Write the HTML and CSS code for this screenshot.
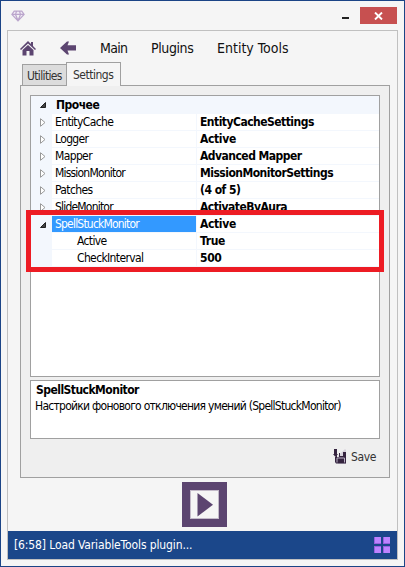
FILE: index.html
```
<!DOCTYPE html>
<html lang="ru">
<head>
<meta charset="utf-8">
<title>Entity Tools</title>
<link rel="stylesheet" href="styles.css">
</head>
<body>
<div class="window">
  <header class="titlebar">
    <svg class="gem" width="14" height="12" viewBox="0 0 14 12"><path d="M3.2 1.2h7.6l2.3 3.2L7 10.8.9 4.4zM1 4.4h12M4.5 4.4L7 10.5l2.5-6.1M4.5 4.4L5.5 1.3M9.5 4.4L8.5 1.3"/></svg>
    <span class="minimize"></span>
    <span class="close"><svg width="9" height="8" viewBox="0 0 9 8"><path d="M1 .5l7 7M8 .5l-7 7"/></svg></span>
  </header>
  <main class="frame">
    <nav class="menu">
      <svg class="home" width="16" height="15" viewBox="0 0 16 15"><path d="M8 0l3 3V1h2v4l3 3-1 1-7-6.500L1 9 0 8z"/><path d="M8 4l5.500 5v5.500H9.500V10h-3v4.500h-4V9z"/></svg>
      <svg class="back" width="16" height="14" viewBox="0 0 16 14"><path d="M0 7l7-6.500h2L7.500 4.300H16v5.200H7.500L9 13.500H7z"/></svg>
      <span class="m1">Main</span><span class="m2">Plugins</span><span class="m3">Entity Tools</span>
    </nav>
    <div class="tabs"><span class="tab">Utilities</span><span class="tab active">Settings</span></div>
    <section class="panel">
      <div class="grid">
        <div class="category"><i class="mark"><svg width="6" height="6"><path class="open" d="M5.500.5v5h-5z"/></svg></i><b class="cat">Прочее</b></div>
        <div class="row"><i class="mark"><svg width="6" height="9"><path d="M.5.700v7.600l4.500-3.800z"/></svg></i><span class="name">EntityCache</span><b class="value">EntityCacheSettings</b></div>
        <div class="row"><i class="mark"><svg width="6" height="9"><path d="M.5.700v7.600l4.500-3.800z"/></svg></i><span class="name">Logger</span><b class="value short">Active</b></div>
        <div class="row"><i class="mark"><svg width="6" height="9"><path d="M.5.700v7.600l4.500-3.800z"/></svg></i><span class="name">Mapper</span><b class="value">Advanced Mapper</b></div>
        <div class="row"><i class="mark"><svg width="6" height="9"><path d="M.5.700v7.600l4.500-3.800z"/></svg></i><span class="name tight">MissionMonitor</span><b class="value">MissionMonitorSettings</b></div>
        <div class="row"><i class="mark"><svg width="6" height="9"><path d="M.5.700v7.600l4.500-3.800z"/></svg></i><span class="name">Patches</span><b class="value">(4 of 5)</b></div>
        <div class="row"><i class="mark"><svg width="6" height="9"><path d="M.5.700v7.600l4.500-3.800z"/></svg></i><span class="name tight">SlideMonitor</span><b class="value">ActivateByAura</b></div>
        <div class="row"><i class="mark"><svg width="6" height="6"><path class="open" d="M5.500.5v5h-5z"/></svg></i><span class="name tight selected">SpellStuckMonitor</span><b class="value short">Active</b></div>
        <div class="row"><i class="mark"></i><span class="name child">Active</span><b class="value short">True</b></div>
        <div class="row"><i class="mark"></i><span class="name child">CheckInterval</span><b class="value short">500</b></div>
        <div class="highlight"></div>
      </div>
      <div class="description"><b>SpellStuckMonitor</b><span>Настройки фонового отключения умений (SpellStuckMonitor)</span></div>
      <div class="save">
        <svg width="15" height="17" viewBox="0 0 15 17"><path fill="#d7d2dc" d="M8 5l4-4 1 1v14H5V8z"/><path fill="#35243f" d="M1 1h3v5h1L2.500 9 0 6h1zM2 9h1V7h1v2h2V5h1v3h3V4h3v11.500H3L2 14z"/><path fill="none" stroke="#bbb1c5" d="M4 14.500V10h7.500v4.500"/></svg>
        <span>Save</span>
      </div>
    </section>
    <div class="play"><svg width="45" height="45"><rect width="45" height="45" fill="#5c4570"/><rect x="8.500" y="8.500" width="28" height="28" fill="#f5f5f5" stroke="#c3bac9"/><path fill="#5c4570" d="M15.500 11v23.500L31 22.700z"/></svg></div>
    <footer class="status"><span>[6:58] Load VariableTools plugin...</span><svg width="16" height="16"><path fill="#985fdf" d="M0 0h7v7H0zM9 0h7v7H9zM0 9h7v7H0zM9 9h7v7H9z"/><path fill="#bd83ff" d="M1 0h6v6H1zM10 0h6v6h-6zM1 10h6v6H1zM10 10h6v6h-6z"/></svg></footer>
  </main>
</div>
</body>
</html>
```
FILE: styles.css
```
* { box-sizing: border-box; }
body { margin: 0; font: 12px/16px "DejaVu Sans Condensed", "DejaVu Sans", sans-serif; font-stretch: condensed; color: #111; }
svg { display: block; flex: none; }
.window { width: 405px; height: 567px; border: 1px solid #1b4486; background: #f5f5f5; padding: 0 7px 7px 6px; }
.titlebar { height: 29px; display: flex; align-items: flex-start; }
.gem { margin: 9px 0 0 4px; fill: #f3edf7; stroke: #bba6cc; stroke-width: 1.2; }
.minimize { width: 7px; height: 2px; background: #222; margin: 16px 11px 0 auto; }
.close { width: 37px; height: 17px; margin-top: 6px; background: #c75050; display: flex; align-items: center; justify-content: center; }
.close svg { fill: none; stroke: #fff; stroke-width: 1.9; }
.frame { width: 391px; height: 530px; border: 1px solid #c0c0c0; display: flex; flex-direction: column; }
.menu { height: 31px; flex: none; display: flex; align-items: center; padding: 3px 0 0 12px; font-size: 14px; white-space: nowrap; }
.menu svg { fill: #5c4570; }
.back { margin-left: 24px; }
.m1 { width: 51px; margin-left: 24px; letter-spacing: -.7px; }
.m2 { width: 66px; letter-spacing: -.4px; }
.m3 { letter-spacing: 0; }
.tabs { height: 23px; flex: none; padding-left: 14px; display: flex; align-items: flex-end; color: #333; white-space: nowrap; }
.tab { width: 44px; height: 21px; border: 1px solid #a0a0a0; border-width: 1px 0 0 1px; background: #dcdcdc; padding: 3px 0 0 4px; letter-spacing: -.65px; }
.tab.active { width: 55px; height: 24px; margin-bottom: -1px; border-right-width: 1px; background: #f5f5f5; padding: 4px 0 0 6px; position: relative; letter-spacing: -.5px; }
.panel { width: 370px; height: 393px; flex: none; margin-left: 12px; border: 1px solid #a0a0a0; background: #efefef; padding: 9px; }
.grid { position: relative; width: 350px; height: 282px; border: 1px solid #a0a0a0; background: #fff; }
.category { height: 18px; display: flex; background: #f3f7fd; line-height: 18px; color: #000; }
.mark { width: 21px; flex: none; display: flex; align-items: center; padding-left: 9px; background: #f3f7fd; }
.mark svg { fill: #fff; stroke: #999; }
.mark .open { fill: #444; stroke: #222; }
.cat { padding-left: 4px; letter-spacing: -.5px; }
.row { display: flex; height: 17px; line-height: 16px; color: #000; white-space: nowrap; }
.name { width: 144px; padding-left: 3px; border-bottom: 1px solid #f3f7fd; letter-spacing: -.63px; }
.tight { letter-spacing: -.8px; }
.value { flex: 1; padding-left: 3px; border-left: 1px solid #f3f7fd; border-bottom: 1px solid #f3f7fd; letter-spacing: -.52px; }
.short { letter-spacing: -.35px; }
.selected { background: #3399ff; background-clip: padding-box; color: #fff; }
.child { padding-left: 25px; }
.highlight { position: absolute; left: -5px; top: 114px; width: 358px; height: 62px; border: 5px solid #ed1c24; }
.description { width: 350px; height: 59px; margin-top: 3px; border: 1px solid #a0a0a0; background: #fff; padding: 1px 4px; display: flex; flex-direction: column; white-space: nowrap; color: #000; }
.description b { letter-spacing: -.53px; padding-left: 1px; }
.description span { letter-spacing: -.73px; }
.save { display: flex; align-items: center; justify-content: flex-end; gap: 3px; margin: 9px 4px 0 0; color: #333; }
.save span { letter-spacing: -.4px; }
.play { margin: 4px 0 0 174px; }
.status { margin-top: auto; height: 28px; background: #1b478a; color: #fff; display: flex; align-items: center; justify-content: space-between; padding: 0 7px 0 6px; }
.status span { letter-spacing: -.12px; }
```
